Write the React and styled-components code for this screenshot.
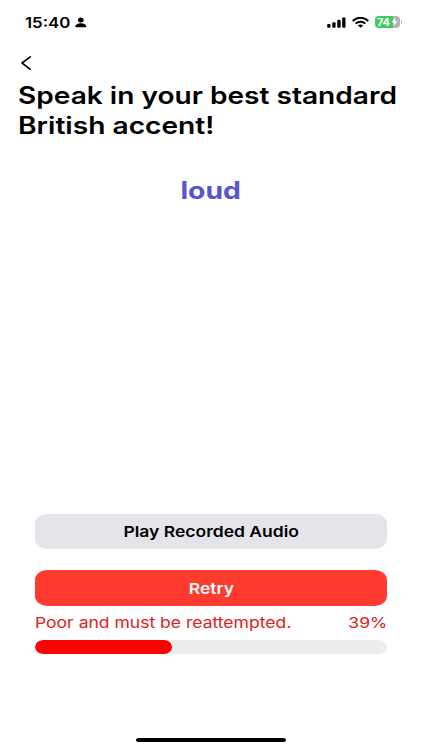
import React from "react";
import styled, { createGlobalStyle } from "styled-components";

const GlobalStyle = createGlobalStyle`
  * { box-sizing: border-box; }
  body { margin: 0; background: #fff; }
`;

const Screen = styled.main`
  display: flex;
  flex-direction: column;
  width: 422px;
  height: 750px;
  overflow: hidden;
  background: #fff;
  color: #000;
  font-family: Inter, "Liberation Sans", sans-serif;
`;

const Wide = styled.span`
  display: inline-block;
  white-space: nowrap;
  transform: scaleX(${(p) => p.$x});
  transform-origin: ${(p) => p.$from || "left"} center;
`;

const StatusBar = styled.header`
  display: flex;
  justify-content: space-between;
  align-items: center;
  height: 44px;
  padding: 0 20px 0 25px;
`;

const StatusGroup = styled.div`
  display: flex;
  align-items: center;
  svg { display: block; }
`;

const Clock = styled.time`
  width: 50px;
  padding-top: 1px;
  font-size: 14.5px;
  font-weight: 600;
  line-height: 18px;
`;

const Signal = styled.svg`margin-right: 6px;`;
const Wifi = styled.svg`margin-right: 6px;`;

const Battery = styled.div`
  display: flex;
  align-items: center;
  width: 25px;
  height: 12px;
  padding-left: 2.5px;
  border-radius: 4px;
  color: #fff;
  background: linear-gradient(90deg, #3ecb5f 74%, #b4b4b8 74%);
  font-size: 11px;
  font-weight: 700;
  line-height: 13px;
`;

const BatteryLevel = styled.span`
  width: 13.5px;
  padding-top: 1px;
  letter-spacing: -0.2px;
`;

const BatteryTip = styled.span`
  width: 1.5px;
  height: 4px;
  margin-left: 1px;
  border-radius: 0 2px 2px 0;
  background: #b4b4b8;
`;

const BackButton = styled.button`
  display: flex;
  width: 12px;
  height: 16px;
  margin: 11px 0 0 20px;
  padding: 0;
  border: 0;
  background: none;
`;

const Title = styled.h1`
  margin: 10px 0 0 17.6px;
  font-size: 24px;
  font-weight: 600;
  line-height: 30px;
`;

const Word = styled.p`
  margin: 35px 0 0;
  color: #5856ce;
  font-size: 24px;
  font-weight: 700;
  line-height: 30px;
  text-align: center;
`;

const Controls = styled.section`
  display: flex;
  flex-direction: column;
  margin: auto 35px 0;
`;

const ActionButton = styled.button`
  height: ${(p) => p.$height}px;
  margin: 0 0 ${(p) => p.$gap}px;
  padding: 1px 0 0;
  border: 0;
  border-radius: 12px / 10px;
  background: ${(p) => p.$bg};
  color: ${(p) => p.$fg};
  font: 600 15px/34px Inter, "Liberation Sans", sans-serif;
`;

const Result = styled.div`
  display: flex;
  justify-content: space-between;
  height: 20px;
  color: #e0201c;
  font-size: 15px;
  line-height: 20px;
`;

const Track = styled.div`
  height: 14px;
  margin-top: 7px;
  overflow: hidden;
  border-radius: 8px / 7px;
  background: #ededef;
`;

const Fill = styled.div`
  height: 100%;
  border-radius: 8px / 7px;
  background: #fe0000;
`;

const HomeIndicator = styled.div`
  flex: none;
  width: 150px;
  height: 4px;
  margin: 84px auto 8px;
  border-radius: 3px / 2px;
  background: #000;
`;

const score = 39;

export default function App() {
  return (
    <Screen>
      <GlobalStyle />
      <StatusBar>
        <StatusGroup>
          <Clock><Wide $x={1.16}>15:40</Wide></Clock>
          <svg width="12" height="11" viewBox="0 0 12 11" aria-hidden="true">
            <ellipse cx="5.8" cy="2.9" rx="2.8" ry="2.5" />
            <path d="M0.3 9.4C0.3 7.6 2.5 6.2 5.8 6.2s5.5 1.4 5.5 3.2c0 .5-.3.8-.8.8H1.1c-.5 0-.8-.3-.8-.8z" />
          </svg>
        </StatusGroup>
        <StatusGroup>
          <Signal width="19" height="11" viewBox="0 0 19 11" aria-hidden="true">
            <rect x="0.2" y="7" width="3.3" height="3.7" rx="1" />
            <rect x="5.3" y="5.2" width="3.3" height="5.5" rx="1" />
            <rect x="10.3" y="2.8" width="3.3" height="7.9" rx="1" />
            <rect x="15.2" y="0.4" width="3.3" height="10.3" rx="1" />
          </Signal>
          <Wifi width="17" height="11" viewBox="0 0 17 11" fill="none" stroke="#000" strokeWidth="2" aria-hidden="true">
            <path d="M0.7 4C5-.3 12-.3 16.3 4" />
            <path d="M3.6 6.6c2.7-2.6 7.1-2.6 9.8 0" />
            <path d="M5.9 8.5c1.5-1.3 3.7-1.3 5.2 0L8.5 10.7z" fill="#000" stroke="none" />
          </Wifi>
          <Battery>
            <BatteryLevel>74</BatteryLevel>
            <svg width="7" height="10" viewBox="0 0 7 10" aria-hidden="true">
              <path d="M4.5 0.5L0.5 5.5h2.5L2.3 9.5 6.5 4.3H4z" fill="#fff" />
            </svg>
          </Battery>
          <BatteryTip />
        </StatusGroup>
      </StatusBar>
      <BackButton aria-label="Back">
        <svg width="12" height="16" viewBox="0 0 12 16" fill="none" stroke="#000" strokeWidth="1.6" strokeLinecap="round" strokeLinejoin="round">
          <path d="M10.3 1.8L2 8l8.3 6.3" />
        </svg>
      </BackButton>
      <Title>
        <Wide $x={1.17}>Speak in your best standard</Wide>
        <br />
        <Wide $x={1.173}>British accent!</Wide>
      </Title>
      <Word><Wide $x={1.18} $from="center">loud</Wide></Word>
      <Controls>
        <ActionButton $bg="#e5e4eb" $fg="#000" $height={35} $gap={21}>
          <Wide $x={1.167} $from="center">Play Recorded Audio</Wide>
        </ActionButton>
        <ActionButton $bg="#ff3b30" $fg="#fff" $height={36} $gap={7}>
          <Wide $x={1.17} $from="center">Retry</Wide>
        </ActionButton>
        <Result>
          <Wide $x={1.168}>Poor and must be reattempted.</Wide>
          <Wide $x={1.17} $from="right">{score}%</Wide>
        </Result>
        <Track><Fill style={{ width: `${score}%` }} /></Track>
      </Controls>
      <HomeIndicator />
    </Screen>
  );
}
